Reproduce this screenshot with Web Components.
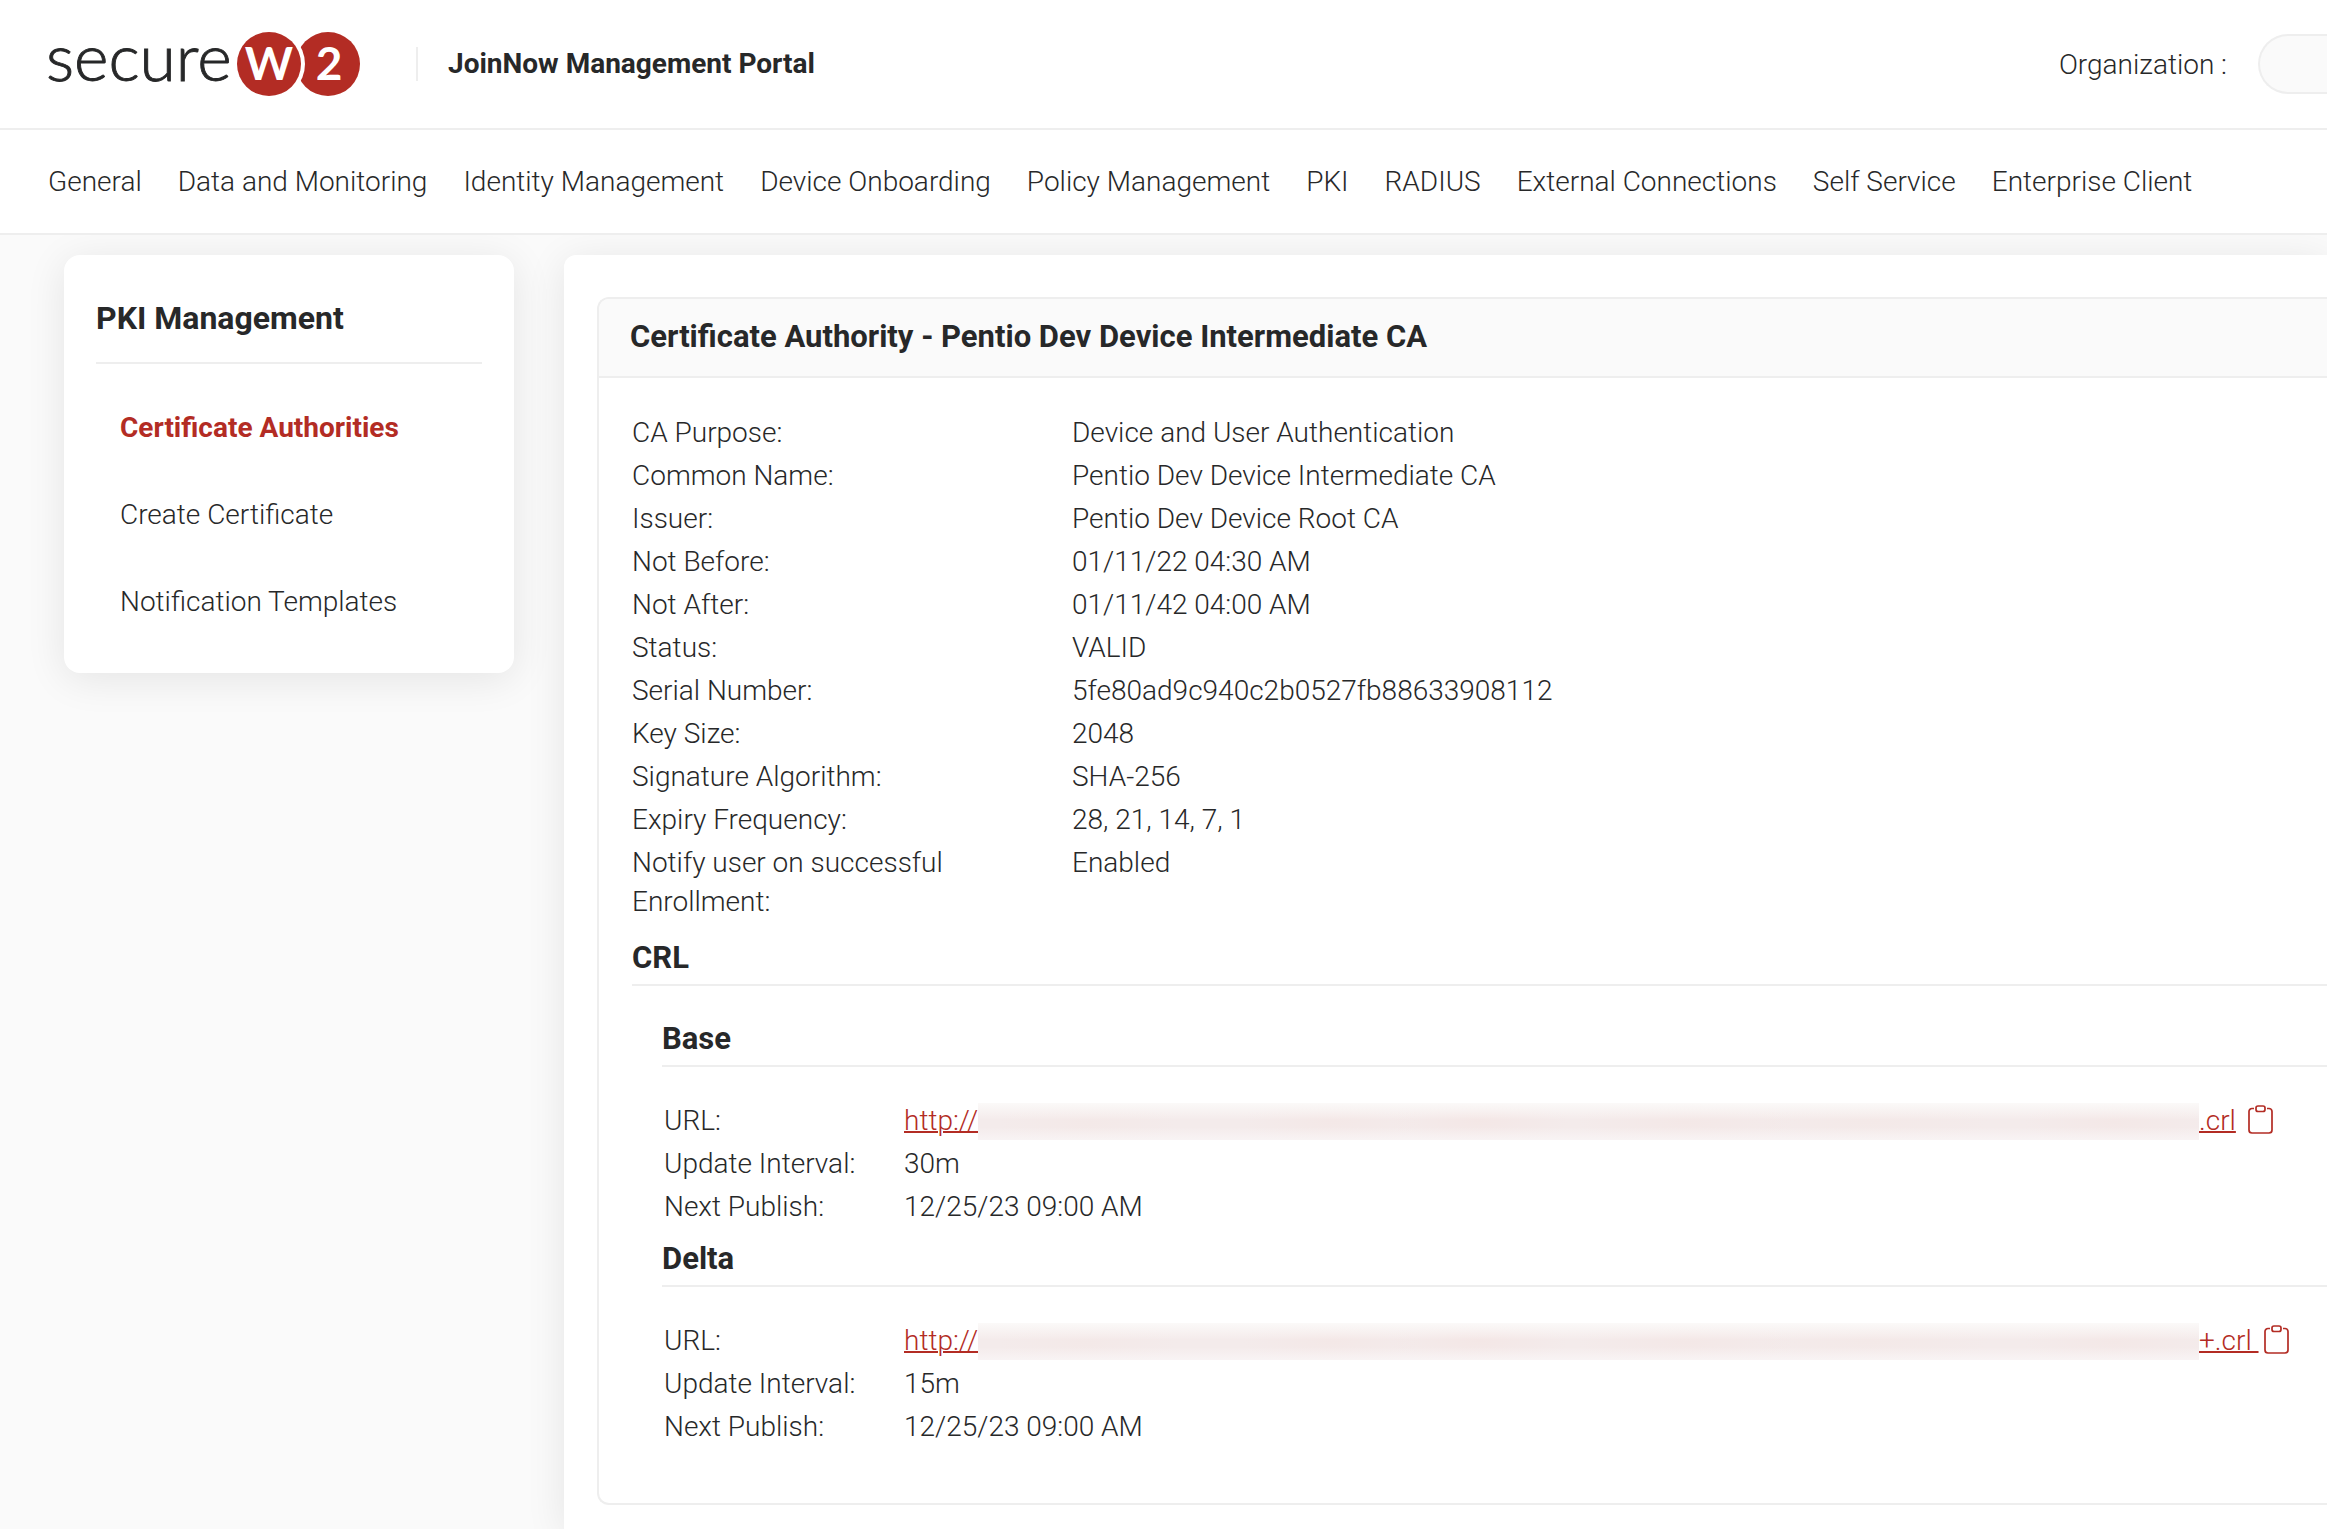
<!DOCTYPE html>
<html lang="en">
<head>
<meta charset="utf-8">
<title>JoinNow Management Portal</title>
<style>
    :root {
        --ink: #272829;
        --red: #b32c24;
        --line: #eeeeee;
        --soft: #fafafa;
        --shadow: 0 6px 40px rgba(0,0,0,0.09);
    }

    body {
        margin: 0;
        background: var(--soft);
        color: var(--ink);
        font: 300 28px/39px Roboto, "Liberation Sans", sans-serif;
    }
</style>
</head>
<body>

<portal-app>
    <portal-header slot="header" heading="JoinNow Management Portal"></portal-header>

    <portal-nav slot="nav">
        <a href="#general">General</a>
        <a href="#data">Data and Monitoring</a>
        <a href="#identity">Identity Management</a>
        <a href="#onboarding">Device Onboarding</a>
        <a href="#policy">Policy Management</a>
        <a href="#pki">PKI</a>
        <a href="#radius">RADIUS</a>
        <a href="#external">External Connections</a>
        <a href="#self-service">Self Service</a>
        <a href="#enterprise">Enterprise Client</a>
    </portal-nav>

    <side-menu slot="side" heading="PKI Management">
        <a href="#authorities" aria-current="page">Certificate Authorities</a>
        <a href="#create">Create Certificate</a>
        <a href="#templates">Notification Templates</a>
    </side-menu>

    <info-panel heading="Certificate Authority - Pentio Dev Device Intermediate CA">
        <detail-table id="ca"></detail-table>
        <section-block heading="CRL">
            <crl-entry heading="Base" suffix=".crl" interval="30m" publish="12/25/23 09:00 AM"></crl-entry>
            <crl-entry heading="Delta" suffix="+.crl " interval="15m" publish="12/25/23 09:00 AM"></crl-entry>
        </section-block>
    </info-panel>
</portal-app>

<script>
    class PortalApp extends HTMLElement {
        constructor() {
            super();
            this.attachShadow({ mode: "open" });
            this.shadowRoot.innerHTML = `
                <style>
                    :host {
                        display: flex;
                        flex-direction: column;
                        min-height: 100vh;
                    }

                    .layout {
                        flex: 1;
                        display: flex;
                        align-items: stretch;
                        gap: 50px;
                        padding: 20px 0 0 64px;
                        overflow: hidden;
                    }

                    aside {
                        flex: 0 0 450px;
                    }

                    main {
                        flex: 1;
                        min-width: 0;
                        box-sizing: border-box;
                        padding: 42px 0 24px 33px;
                        background: #fff;
                        border-top-left-radius: 12px;
                        box-shadow: var(--shadow);
                    }
                </style>
                <slot name="header"></slot>
                <slot name="nav"></slot>
                <div class="layout">
                    <aside><slot name="side"></slot></aside>
                    <main><slot></slot></main>
                </div>
            `;
        }
    }

    class PortalHeader extends HTMLElement {
        constructor() {
            super();
            this.attachShadow({ mode: "open" });
            this.shadowRoot.innerHTML = `
                <style>
                    :host {
                        display: flex;
                        align-items: center;
                        height: 128px;
                        padding-left: 40px;
                        background: #fff;
                        border-bottom: 2px solid var(--line);
                    }

                    svg {
                        flex: none;
                        display: block;
                    }

                    .title {
                        margin-left: 56px;
                        padding-left: 30px;
                        border-left: 2px solid var(--line);
                        font-weight: 700;
                        line-height: 34px;
                        white-space: nowrap;
                    }

                    label {
                        margin-left: auto;
                        padding-right: 31px;
                        white-space: nowrap;
                    }

                    input {
                        flex: none;
                        box-sizing: border-box;
                        width: 69px;
                        height: 60px;
                        padding: 0 0 0 28px;
                        border: 2px solid var(--line);
                        border-right: 0;
                        border-radius: 30px 0 0 30px;
                        background: var(--soft);
                        color: inherit;
                        font: inherit;
                    }
                </style>
                <svg width="320" height="116" viewBox="0 -24 320 116" role="img" aria-label="SecureW2">
                    <text x="6" y="51" font-family="Lato" font-weight="300" font-size="66" fill="#272829" stroke="#272829" stroke-width="0.9">secure</text>
                    <circle cx="288" cy="34" r="32" fill="#b32c24"/>
                    <circle cx="229" cy="34" r="36" fill="#fff"/>
                    <circle cx="229" cy="34" r="32" fill="#b32c24"/>
                    <text x="229" y="50" text-anchor="middle" font-family="Lato" font-weight="700" font-size="46" fill="#fff">W</text>
                    <text x="289" y="50" text-anchor="middle" font-family="Lato" font-weight="700" font-size="46" fill="#fff">2</text>
                </svg>
                <div class="title"></div>
                <label for="org">Organization :</label>
                <input id="org" type="text">
            `;
            this.shadowRoot.querySelector(".title").textContent = this.getAttribute("heading");
        }
    }

    class PortalNav extends HTMLElement {
        constructor() {
            super();
            this.attachShadow({ mode: "open" });
            this.shadowRoot.innerHTML = `
                <style>
                    :host {
                        display: block;
                        background: #fff;
                        border-bottom: 2px solid var(--line);
                    }

                    nav {
                        display: flex;
                        gap: 36px;
                        padding: 32px 48px;
                    }

                    ::slotted(a) {
                        color: var(--ink);
                        text-decoration: none;
                        white-space: nowrap;
                    }
                </style>
                <nav><slot></slot></nav>
            `;
        }
    }

    class SideMenu extends HTMLElement {
        constructor() {
            super();
            this.attachShadow({ mode: "open" });
            this.shadowRoot.innerHTML = `
                <style>
                    :host {
                        display: block;
                        padding: 42px 32px 52px;
                        background: #fff;
                        border-radius: 16px;
                        box-shadow: var(--shadow);
                    }

                    h2 {
                        margin: 0;
                        padding-bottom: 23px;
                        border-bottom: 2px solid var(--line);
                        font-size: 32px;
                        font-weight: 700;
                        line-height: 42px;
                    }

                    nav {
                        display: flex;
                        flex-direction: column;
                        gap: 48px;
                        padding: 44px 0 0 24px;
                    }

                    ::slotted(a) {
                        color: var(--ink);
                        text-decoration: none;
                    }

                    ::slotted(a[aria-current]) {
                        color: var(--red);
                        font-weight: 700;
                    }
                </style>
                <h2></h2>
                <nav><slot></slot></nav>
            `;
            this.shadowRoot.querySelector("h2").textContent = this.getAttribute("heading");
        }
    }

    class InfoPanel extends HTMLElement {
        constructor() {
            super();
            this.attachShadow({ mode: "open" });
            this.shadowRoot.innerHTML = `
                <style>
                    :host {
                        display: block;
                        border: 2px solid var(--line);
                        border-right: 0;
                        border-radius: 12px 0 0 12px;
                        overflow: hidden;
                    }

                    h1 {
                        margin: 0;
                        padding: 17px 31px 18px;
                        background: var(--soft);
                        border-bottom: 2px solid var(--line);
                        font-size: 31px;
                        font-weight: 700;
                        line-height: 42px;
                    }

                    .body {
                        padding: 33px 0 55px 33px;
                    }
                </style>
                <h1></h1>
                <div class="body"><slot></slot></div>
            `;
            this.shadowRoot.querySelector("h1").textContent = this.getAttribute("heading");
        }
    }

    class SectionBlock extends HTMLElement {
        constructor() {
            super();
            this.attachShadow({ mode: "open" });
            this.shadowRoot.innerHTML = `
                <style>
                    :host {
                        display: block;
                        margin-top: 14px;
                    }

                    h2 {
                        margin: 0;
                        padding-bottom: 5px;
                        border-bottom: 2px solid var(--line);
                        font-size: 31px;
                        font-weight: 700;
                        line-height: 42px;
                    }

                    .entries {
                        display: flex;
                        flex-direction: column;
                        gap: 10px;
                        padding: 32px 0 0 30px;
                    }
                </style>
                <h2></h2>
                <div class="entries"><slot></slot></div>
            `;
            this.shadowRoot.querySelector("h2").textContent = this.getAttribute("heading");
        }
    }

    // Label / value rows. A value is either a string or a node.
    class DetailTable extends HTMLElement {
        constructor() {
            super();
            this.attachShadow({ mode: "open" });
            this.shadowRoot.innerHTML = `
                <style>
                    :host {
                        display: block;
                        --label-width: 440px;
                    }

                    :host([compact]) {
                        --label-width: 240px;
                    }

                    table {
                        width: 100%;
                        border-collapse: collapse;
                        table-layout: fixed;
                    }

                    th, td {
                        padding: 2px 0;
                        font-weight: 300;
                        text-align: left;
                        vertical-align: top;
                    }

                    th {
                        width: var(--label-width);
                    }
                </style>
                <table><tbody></tbody></table>
            `;
        }

        set rows(rows) {
            const body = this.shadowRoot.querySelector("tbody");
            body.replaceChildren();
            for (const [label, value] of rows) {
                const tr = body.insertRow();
                const th = document.createElement("th");
                th.scope = "row";
                th.textContent = label;
                tr.append(th);
                tr.insertCell().append(value);
            }
        }
    }

    // Link with its host part masked, followed by a copy button
    class MaskedLink extends HTMLElement {
        constructor() {
            super();
            this.attachShadow({ mode: "open" });
            this.shadowRoot.innerHTML = `
                <style>
                    :host {
                        display: flex;
                        align-items: center;
                        height: 39px;
                        white-space: pre;
                    }

                    a {
                        display: flex;
                        align-items: flex-end;
                        color: var(--red);
                        text-decoration-line: underline;
                        text-decoration-thickness: 2px;
                    }

                    .mask {
                        width: 1221px;
                        height: 37px;
                        background:
                            linear-gradient(rgba(252,251,250,0.9), rgba(252,251,250,0) 45%, rgba(252,251,250,0) 65%, rgba(250,247,248,0.7)),
                            radial-gradient(ellipse 90px 26px at 9% 55%, #f4e9e8, transparent),
                            radial-gradient(ellipse 90px 26px at 29% 50%, #f4e8e7, transparent),
                            radial-gradient(ellipse 90px 26px at 41% 48%, #f4e7e6, transparent),
                            radial-gradient(ellipse 110px 26px at 58% 52%, #f4e8e7, transparent),
                            radial-gradient(ellipse 120px 26px at 73% 50%, #f4e9e8, transparent),
                            radial-gradient(ellipse 90px 26px at 93% 52%, #f4e8e7, transparent),
                            #f4ebeb;
                    }

                    button {
                        display: block;
                        margin-left: 12px;
                        padding: 0;
                        border: 0;
                        background: none;
                        color: var(--red);
                    }

                    :host([tight]) button {
                        margin-left: 5px;
                    }

                    svg {
                        display: block;
                    }
                </style>
                <a href="#crl"><span>http://</span><span class="mask"></span><span class="end"></span></a>
                <button type="button" aria-label="Copy URL">
                    <svg width="25" height="32" viewBox="0 0 25 32" fill="none" stroke="currentColor" stroke-width="1.7">
                        <path d="M6 3.5H4a3 3 0 0 0-3 3V25a3 3 0 0 0 3 3h17a3 3 0 0 0 3-3V6.500a3 3 0 0 0-3-3h-2"/>
                        <rect x="8" y="1" width="9" height="5.500" rx="2"/>
                    </svg>
                </button>
            `;
        }

        set suffix(text) {
            this.shadowRoot.querySelector(".end").textContent = text;
            this.toggleAttribute("tight", text.endsWith(" "));
        }
    }

    class CrlEntry extends HTMLElement {
        constructor() {
            super();
            this.attachShadow({ mode: "open" });
            this.shadowRoot.innerHTML = `
                <style>
                    :host {
                        display: block;
                    }

                    h3 {
                        margin: 0;
                        padding-bottom: 5px;
                        border-bottom: 2px solid var(--line);
                        font-size: 31px;
                        font-weight: 700;
                        line-height: 42px;
                    }

                    detail-table {
                        padding: 32px 0 0 2px;
                    }
                </style>
                <h3></h3>
                <detail-table compact></detail-table>
            `;
            this.shadowRoot.querySelector("h3").textContent = this.getAttribute("heading");

            const link = document.createElement("masked-link");
            link.suffix = this.getAttribute("suffix");
            this.shadowRoot.querySelector("detail-table").rows = [
                ["URL:", link],
                ["Update Interval:", this.getAttribute("interval")],
                ["Next Publish:", this.getAttribute("publish")]
            ];
        }
    }

    // detail-table and masked-link come first: crl-entry sets their properties in its constructor
    customElements.define("detail-table", DetailTable);
    customElements.define("masked-link", MaskedLink);
    customElements.define("crl-entry", CrlEntry);
    customElements.define("section-block", SectionBlock);
    customElements.define("info-panel", InfoPanel);
    customElements.define("side-menu", SideMenu);
    customElements.define("portal-nav", PortalNav);
    customElements.define("portal-header", PortalHeader);
    customElements.define("portal-app", PortalApp);

    document.getElementById("ca").rows = [
        ["CA Purpose:", "Device and User Authentication"],
        ["Common Name:", "Pentio Dev Device Intermediate CA"],
        ["Issuer:", "Pentio Dev Device Root CA"],
        ["Not Before:", "01/11/22 04:30 AM"],
        ["Not After:", "01/11/42 04:00 AM"],
        ["Status:", "VALID"],
        ["Serial Number:", "5fe80ad9c940c2b0527fb88633908112"],
        ["Key Size:", "2048"],
        ["Signature Algorithm:", "SHA-256"],
        ["Expiry Frequency:", "28, 21, 14, 7, 1"],
        ["Notify user on successful Enrollment:", "Enabled"]
    ];
</script>
</body>
</html>
